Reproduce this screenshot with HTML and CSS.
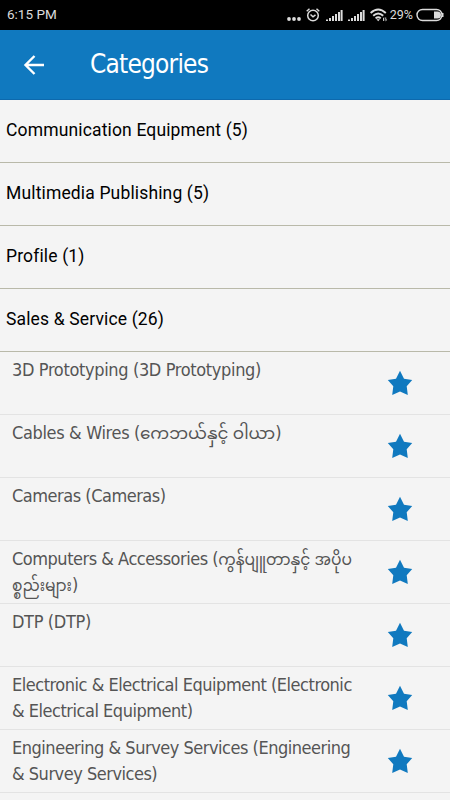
FILE: index.html
```html
<!DOCTYPE html>
<html lang="en">
<head>
    <meta charset="UTF-8">
    <meta name="viewport" content="width=device-width, initial-scale=1.0">
    <title>Categories</title>
    <link rel="stylesheet" href="styles.css">
</head>
<body>
    <svg width="0" height="0" class="symbols">
        <symbol id="star" viewBox="0 0 26 26">
            <path d="M13 .8L17 8.8L25.2 10L19.7 16.3L20.8 25L13 21.6L5.2 25L6.3 16.3L.8 10L9 8.8Z"/>
        </symbol>
        <symbol id="signal" viewBox="0 0 17 13">
            <path d="M0 10.5h2v1.5H0zM3 9h2v3H3zM6 7h2v5H6zM9 5h2v7H9zM12 3h2v9h-2zM14.6 1h2v11h-2z"/>
        </symbol>
    </svg>

    <div class="status-bar">
        <span class="time">6:15 PM</span>
        <div class="status-icons">
            <svg class="dots" width="14" height="4" viewBox="0 0 14 4"><circle cx="2" cy="2" r="1.9"/><circle cx="7" cy="2" r="1.9"/><circle cx="12" cy="2" r="1.9"/></svg>
            <svg class="alarm" width="14" height="14" viewBox="0 0 14 14"><circle cx="7" cy="7.5" r="5.3"/><path d="M.7 3.2L3.5.8M13.3 3.2L10.5.8M4.5 6.5L7 8.8L9.5 6.8"/></svg>
            <svg class="signal" width="17" height="13"><use href="#signal"/></svg>
            <svg class="signal" width="17" height="13"><use href="#signal"/></svg>
            <svg class="wifi" width="18" height="14" viewBox="0 0 18 14"><path d="M.6 5Q8.2-2 15.8 5M3.2 7.8Q8.2 3 13.2 7.8M5.6 10.4Q8.2 8 10.8 10.4"/><path class="fill" d="M6.4 11.2h3.6L8.2 13.3zM13 10.5l1.2-1.5v4h-1zM15.2 9.5h1v2h1L15.7 13.5z"/></svg>
            <span class="percent">29%</span>
            <svg class="battery" width="28" height="14" viewBox="0 0 28 14"><rect x="1" y="1.5" width="25" height="11" rx="5.5"/><path d="M18 3.5h3.5a3.5 3.5 0 0 1 0 7H18zM26 5h1.5v4H26z"/></svg>
        </div>
    </div>

    <div class="header">
        <svg class="back" width="22" height="22" viewBox="0 0 22 22"><path d="M21 11H3M11.5 2L2.5 11L11.5 20"/></svg>
        <h1>Categories</h1>
    </div>

    <ul class="groups">
        <li>Communication Equipment (5)</li>
        <li>Multimedia Publishing (5)</li>
        <li>Profile (1)</li>
        <li>Sales &amp; Service (26)</li>
    </ul>

    <ul class="items">
        <li><p class="loose">3D Prototyping (3D Prototyping)</p><svg class="star"><use href="#star"/></svg></li>
        <li><p class="loose">Cables &amp; Wires (<span class="my" lang="my">ကေဘယ်နှင့် ဝါယာ</span>)</p><svg class="star"><use href="#star"/></svg></li>
        <li><p>Cameras (Cameras)</p><svg class="star"><use href="#star"/></svg></li>
        <li><p>Computers &amp; Accessories (<span class="my my-long" lang="my">ကွန်ပျူတာနှင့် အပိုပ<br>စ္စည်းများ</span>)</p><svg class="star"><use href="#star"/></svg></li>
        <li><p class="loose">DTP (DTP)</p><svg class="star"><use href="#star"/></svg></li>
        <li><p>Electronic &amp; Electrical Equipment (Electronic<br>&amp; Electrical Equipment)</p><svg class="star"><use href="#star"/></svg></li>
        <li><p>Engineering &amp; Survey Services (Engineering<br>&amp; Survey Services)</p><svg class="star"><use href="#star"/></svg></li>
    </ul>
</body>
</html>
```
FILE: styles.css
```css
* {
    box-sizing: border-box;
}

body {
    margin: 0;
    height: 800px;
    overflow: hidden;
    background-color: #f4f4f4;
    font-family: "DejaVu Sans Condensed", "DejaVu Sans", sans-serif;
}

.symbols {
    display: block;
    height: 0;
}

ul {
    list-style: none;
    margin: 0;
    padding: 0;
}

.status-bar {
    display: flex;
    justify-content: space-between;
    align-items: center;
    height: 30px;
    padding: 0 6px 0 7px;
    background-color: #000;
    color: #dcdcdc;
    font-family: Roboto, sans-serif;
    font-size: 13.5px;
}

.time {
    margin-top: -2px;
}

.status-icons {
    display: flex;
    align-items: center;
    fill: #dcdcdc;
}

.dots {
    margin: 8px 5px 0 0;
}

.alarm {
    margin-right: 6px;
    fill: none;
    stroke: #dcdcdc;
    stroke-width: 1.5;
}

.signal {
    margin-right: 5px;
}

.wifi {
    margin-right: 2px;
    fill: none;
    stroke: #dcdcdc;
    stroke-width: 1.9;
}

.wifi .fill {
    fill: #dcdcdc;
    stroke: none;
}

.percent {
    margin: -2px 3px 0 0;
    font-size: 12.5px;
}

.battery rect {
    fill: none;
    stroke: #dcdcdc;
    stroke-width: 1.4;
}

.header {
    display: flex;
    align-items: center;
    height: 70px;
    padding-left: 23px;
    background-color: #1079bf;
    border-bottom: 1px solid #0d69ad;
    color: #fff;
}

.back {
    fill: none;
    stroke: #fff;
    stroke-width: 2.4;
}

h1 {
    margin: 0 0 2px 45px;
    font-size: 26px;
    font-weight: normal;
    line-height: 30px;
    letter-spacing: -0.8px;
}

.groups li {
    display: flex;
    align-items: center;
    height: 63px;
    padding: 0 0 2px 6px;
    border-bottom: 1px solid #b9b9a9;
    color: #000;
    font-family: Roboto, sans-serif;
    font-size: 17.5px;
    letter-spacing: 0.15px;
}

.items li {
    display: flex;
    justify-content: space-between;
    height: 63px;
    padding: 5px 37px 0 12px;
    border-bottom: 1px solid #e3e3e3;
    color: #555;
    font-size: 18px;
    line-height: 26px;
    letter-spacing: -0.48px;
    white-space: nowrap;
}

.items p {
    margin: 0;
}

.items .loose {
    letter-spacing: -0.35px;
}

.my {
    font-family: "Noto Sans Myanmar", "Padauk", "Myanmar Text", sans-serif;
    font-size: 16.8px;
    line-height: 20px;
    letter-spacing: 0;
}

.my-long {
    font-size: 15.5px;
}

.star {
    width: 26px;
    height: 26px;
    margin-top: 13px;
    fill: #1079bf;
}
```
